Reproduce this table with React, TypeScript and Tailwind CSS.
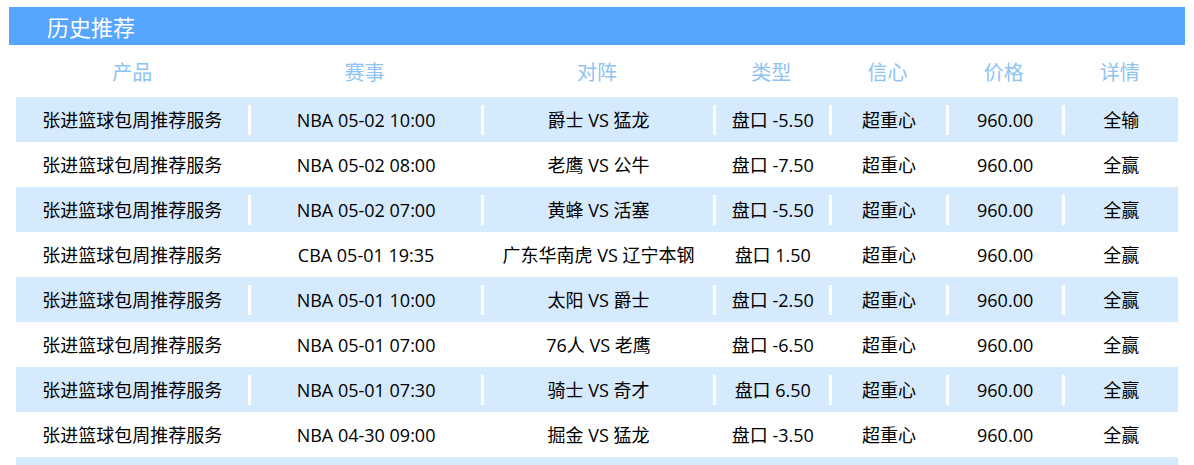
const rows = [
  ["NBA 05-02 10:00", "爵士 VS 猛龙", "盘口 -5.50", "全输"],
  ["NBA 05-02 08:00", "老鹰 VS 公牛", "盘口 -7.50", "全赢"],
  ["NBA 05-02 07:00", "黄蜂 VS 活塞", "盘口 -5.50", "全赢"],
  ["CBA 05-01 19:35", "广东华南虎 VS 辽宁本钢", "盘口 1.50", "全赢"],
  ["NBA 05-01 10:00", "太阳 VS 爵士", "盘口 -2.50", "全赢"],
  ["NBA 05-01 07:00", "76人 VS 老鹰", "盘口 -6.50", "全赢"],
  ["NBA 05-01 07:30", "骑士 VS 奇才", "盘口 6.50", "全赢"],
  ["NBA 04-30 09:00", "掘金 VS 猛龙", "盘口 -3.50", "全赢"],
  ["", "", "", ""],
]

const heads = ["产品", "赛事", "对阵", "类型", "信心", "价格", "详情"]
const widths = ["w-[20%]", "w-[20%]", "w-[20%]", "w-[10%]", "w-[10%]", "w-[10%]", "w-[10%]"]

export default function App() {
  return (
    <div
      className="w-[1194px] h-[465px] overflow-hidden bg-white pt-[7px] px-[9px]"
      style={{ fontFamily: '"Open Sans", "Noto Sans CJK SC", sans-serif' }}
    >
      <div className="h-[38px] bg-[#56a5ff] flex items-center pl-[38px] pt-[2px]">
        <h2 className="text-[22px] text-white leading-none">历史推荐</h2>
      </div>

      <div className="px-[7px]">
        <div className="flex h-[52px] items-center pt-[4px]">
          {heads.map((h, i) => (
            <div key={h} className={`${widths[i]} text-center text-[20px] text-[#8ec3f2]`}>
              {h}
            </div>
          ))}
        </div>

        {rows.map((r, idx) => {
          const cells = ["张进篮球包周推荐服务", r[0], r[1], r[2], "超重心", "960.00", r[3]]
          const empty = r[0] === ""
          return (
            <div
              key={idx}
              className={`flex h-[45px] items-center ${idx % 2 === 0 ? "bg-[#d6eafd]" : "bg-white"}`}
            >
              {cells.map((c, i) => (
                <div
                  key={i}
                  className={`${widths[i]} h-[30px] pt-[2px] flex items-center justify-center text-[18px] text-black ${i > 0 ? "border-l-[3px] border-white" : ""}`}
                >
                  {empty ? "" : c}
                </div>
              ))}
            </div>
          )
        })}
      </div>
    </div>
  )
}
